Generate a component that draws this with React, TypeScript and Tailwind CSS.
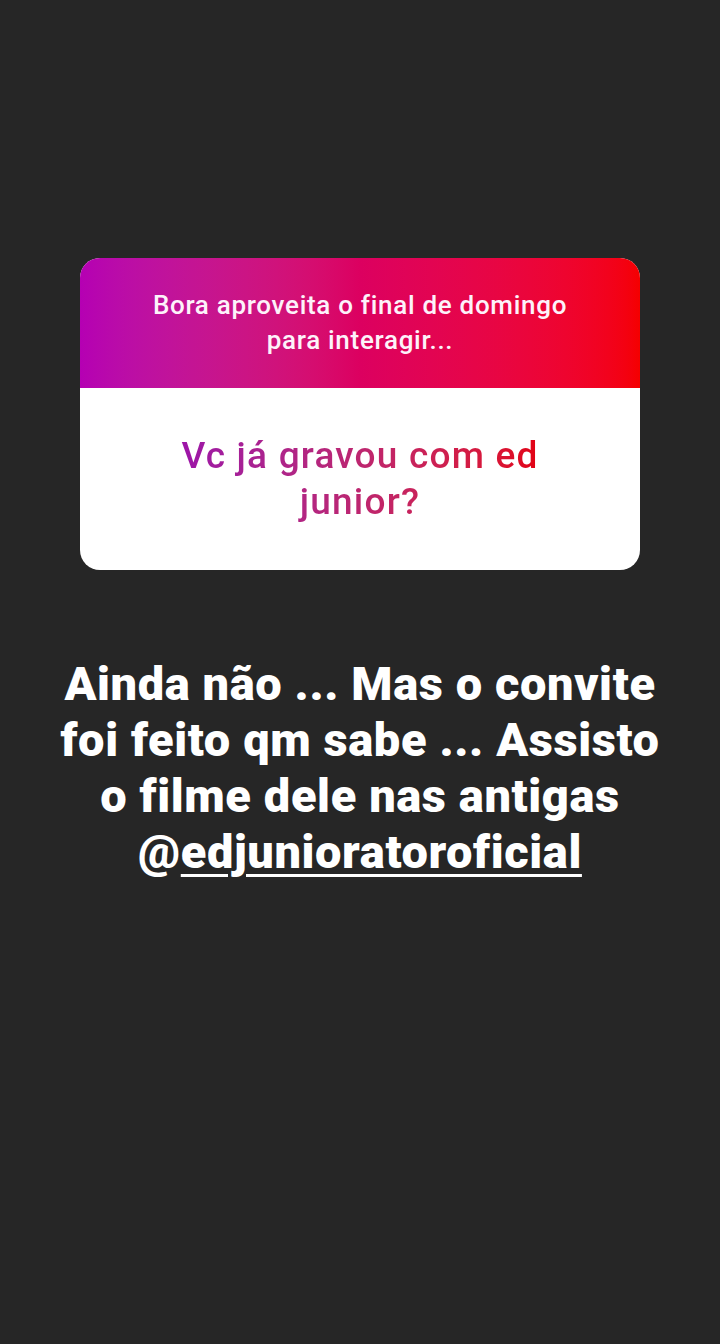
export default function App() {
  return (
    <div
      className="min-h-[1344px] w-[720px] bg-[#262626] flex flex-col items-center pt-[258px]"
      style={{ fontFamily: "Roboto, 'Noto Sans', sans-serif" }}
    >
      {/* Question sticker */}
      <div className="w-[560px] rounded-[20px] overflow-hidden bg-white">
        <div className="bg-gradient-to-r from-[#b500b3] via-[#dc0060] to-[#f50000] h-[130px] flex items-center justify-center px-4">
          <p className="text-[#fdf2fa] font-medium text-[26px] leading-[35px] tracking-[0.7px] text-center">
            Bora aproveita o final de domingo
            <br />
            para interagir...
          </p>
        </div>
        <div className="h-[182px] flex items-center justify-center px-6">
          <p className="text-[37px] font-medium leading-[46px] tracking-[1.2px] text-center bg-gradient-to-r from-[#9c14a8] to-[#e2000e] bg-clip-text text-transparent">
            Vc já gravou com ed
            <br />
            junior?
          </p>
        </div>
      </div>

      {/* Answer */}
      <p className="mt-[86px] text-white font-black text-[47px] leading-[56px] tracking-[0.6px] text-center">
        Ainda não ... Mas o convite
        <br />
        foi feito qm sabe ... Assisto
        <br />
        o filme dele nas antigas
        <br />
        @<span className="underline decoration-[3px] underline-offset-[6px]">edjunioratoroficial</span>
      </p>
    </div>
  );
}
